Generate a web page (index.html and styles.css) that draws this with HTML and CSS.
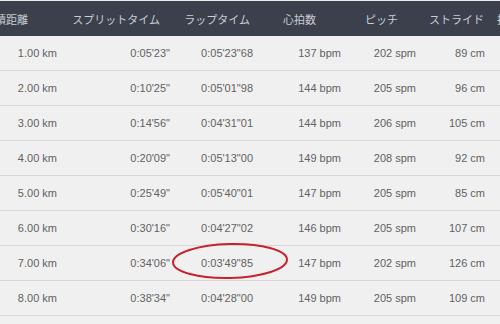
FILE: index.html
```html
<!DOCTYPE html>
<html lang="ja">
<head>
<meta charset="utf-8">
<link rel="stylesheet" href="styles.css">
</head>
<body>
<div class="wrap">
  <table class="laps">
    <colgroup>
      <col class="c1"><col class="c2"><col class="c3"><col class="c4"><col class="c5"><col class="c6"><col class="c7">
    </colgroup>
    <thead>
      <tr><th>累積距離</th><th>スプリットタイム</th><th>ラップタイム</th><th>心拍数</th><th>ピッチ</th><th>ストライド</th><th class="more">接地時間</th></tr>
    </thead>
    <tbody>
      <tr><td>1.00 km</td><td>0:05'23"</td><td>0:05'23"68</td><td>137 bpm</td><td>202 spm</td><td>89 cm</td><td></td></tr>
      <tr><td>2.00 km</td><td>0:10'25"</td><td>0:05'01"98</td><td>144 bpm</td><td>205 spm</td><td>96 cm</td><td></td></tr>
      <tr><td>3.00 km</td><td>0:14'56"</td><td>0:04'31"01</td><td>144 bpm</td><td>206 spm</td><td>105 cm</td><td></td></tr>
      <tr><td>4.00 km</td><td>0:20'09"</td><td>0:05'13"00</td><td>149 bpm</td><td>208 spm</td><td>92 cm</td><td></td></tr>
      <tr><td>5.00 km</td><td>0:25'49"</td><td>0:05'40"01</td><td>147 bpm</td><td>205 spm</td><td>85 cm</td><td></td></tr>
      <tr><td>6.00 km</td><td>0:30'16"</td><td>0:04'27"02</td><td>146 bpm</td><td>205 spm</td><td>107 cm</td><td></td></tr>
      <tr><td>7.00 km</td><td>0:34'06"</td><td>0:03'49"85</td><td>147 bpm</td><td>202 spm</td><td>126 cm</td><td></td></tr>
      <tr><td>8.00 km</td><td>0:38'34"</td><td>0:04'28"00</td><td>149 bpm</td><td>205 spm</td><td>109 cm</td><td></td></tr>
      <tr><td></td><td></td><td></td><td></td><td></td><td></td><td></td></tr>
    </tbody>
  </table>
  <svg class="mark" width="120" height="40" viewBox="0 0 120 40">
    <ellipse cx="60" cy="20" rx="57" ry="17" transform="rotate(-1.5 60 20)" fill="none" stroke="#c8222c" stroke-width="2"/>
  </svg>
</div>
</body>
</html>
```
FILE: styles.css
```css
html, body {
  margin: 0;
  padding: 0;
  background: #f0f0f0;
}
.wrap {
  position: relative;
  width: 500px;
  height: 324px;
  overflow: hidden;
  padding-top: 1px;
  box-sizing: border-box;
  background: #ececec;
}
.laps {
  margin-left: -20px;
  width: 600px;
  table-layout: fixed;
  border-collapse: collapse;
  font-family: "Liberation Sans", Arial, "Noto Sans CJK JP", sans-serif;
  white-space: nowrap;
}
.c1 { width: 84px; }
.c2 { width: 112px; }
.c3 { width: 86px; }
.c4 { width: 86px; }
.c5 { width: 76px; }
.c6 { width: 68px; }
.c7 { width: 88px; }
.laps th {
  height: 35px;
  padding: 0;
  background: #3b404c;
  color: #c9cdd5;
  font-family: "Noto Sans CJK JP", sans-serif;
  font-weight: normal;
  font-size: 11px;
  text-align: right;
  overflow: hidden;
}
.laps th:nth-child(1) { padding-right: 36px; }
.laps th:nth-child(2) { padding-right: 16px; }
.laps th:nth-child(3) { padding-right: 12px; }
.laps th:nth-child(4) { padding-right: 32px; }
.laps th:nth-child(5) { padding-right: 26px; }
.laps th:nth-child(6) { padding-right: 8px; }
.laps th.more { text-align: left; padding-left: 5px; }
.laps td {
  height: 34px;
  padding: 0;
  background: #f0f0f0;
  border-bottom: 1px solid #d8d8d8;
  color: #626262;
  font-size: 11px;
  text-align: right;
}
.laps td:nth-child(1) { padding-right: 7px; }
.laps td:nth-child(2) { padding-right: 6px; }
.laps td:nth-child(3) { padding-right: 9px; }
.laps td:nth-child(4) { padding-right: 7px; }
.laps td:nth-child(5) { padding-right: 8px; }
.laps td:nth-child(6) { padding-right: 7px; }
.mark {
  position: absolute;
  left: 170px;
  top: 241px;
}
```
